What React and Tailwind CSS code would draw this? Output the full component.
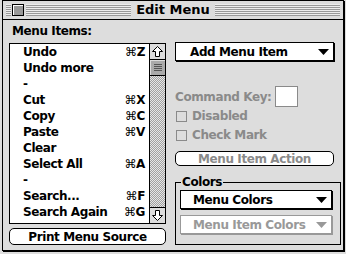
import React from 'react'

const items = [
  ['Undo', 'Z'],
  ['Undo more', ''],
  ['-', ''],
  ['Cut', 'X'],
  ['Copy', 'C'],
  ['Paste', 'V'],
  ['Clear', ''],
  ['Select All', 'A'],
  ['-', ''],
  ['Search...', 'F'],
  ['Search Again', 'G'],
]

const font = { fontFamily: '"DejaVu Sans", "Liberation Sans", sans-serif' }

function Triangle({ color = '#000' }) {
  return (
    <svg width="11" height="6" viewBox="0 0 11 6">
      <polygon points="0,0 11,0 5.5,6" fill={color} />
    </svg>
  )
}

function Arrow({ down }) {
  return (
    <svg width="11" height="11" viewBox="0 0 11 11" className={down ? 'rotate-180' : ''}>
      <polygon points="5.5,0.5 10.5,5.5 7.5,5.5 7.5,10.5 3.5,10.5 3.5,5.5 0.5,5.5" fill="#fff" stroke="#000" strokeWidth="1" />
    </svg>
  )
}

function Popup({ label, disabled, className = '' }) {
  return (
    <div
      className={`flex items-center justify-between h-[19px] pr-[4px] bg-white border ${
        disabled ? 'border-[#999] text-[#999] shadow-[1px_1px_0_#999]' : 'border-black shadow-[1px_1px_0_#000]'
      } ${className}`}
    >
      <span>{label}</span>
      <Triangle color={disabled ? '#999' : '#000'} />
    </div>
  )
}

function Checkbox({ label }) {
  return (
    <div className="flex items-center gap-[5px] h-[16px] text-[#8a8a8a]">
      <div className="w-[11px] h-[11px] border border-[#8a8a8a] ml-[1px]" />
      <span>{label}</span>
    </div>
  )
}

export default function App() {
  return (
    <div className="w-[346px] h-[254px] bg-[#dddddd] pl-[2px] overflow-hidden text-[12px] font-bold text-black leading-[16px] tracking-[-0.4px]" style={font}>
      <div className="w-[342px] h-[251px] border border-black shadow-[1px_1px_0_#000] bg-[#dddddd] flex flex-col">
        {/* title bar */}
        <div className="h-[19px] shrink-0 border-b border-black flex items-center px-[3px]">
          <div className="relative flex-1 h-[12px] flex items-center justify-center bg-[repeating-linear-gradient(to_bottom,#eeeeee_0px,#eeeeee_1px,#9a9a9a_1px,#9a9a9a_2px)]">
            <div className="absolute left-[5px] top-[-1px] w-[15px] h-[14px] bg-[#dddddd] px-[1px] flex items-center">
              <div className="w-[12px] h-[12px] border border-black bg-[#999] shadow-[inset_1px_1px_0_#fff]" />
            </div>
            <span className="bg-[#dddddd] px-[5px] text-[13px] leading-[14px] tracking-normal">Edit Menu</span>
          </div>
        </div>

        {/* body */}
        <div className="flex pl-[6px] pr-[2px] gap-[9px]">
          {/* left column */}
          <div className="w-[157px] flex flex-col">
            <div className="pt-[3px] pl-[3px] h-[23px]">Menu Items:</div>
            <div className="h-[181px] border border-black bg-white flex">
              <div className="flex-1 flex flex-col">
                {items.map(([name, key], i) => (
                  <div key={i} className="h-[16px] flex items-center justify-between pl-[13px] pr-[4px]">
                    <span>{name}</span>
                    {key && (
                      <span>
                        <span className="font-normal">⌘</span>
                        {key}
                      </span>
                    )}
                  </div>
                ))}
              </div>
              <div className="w-[16px] border-l border-black flex flex-col">
                <div className="h-[16px] border-b border-black flex items-center justify-center bg-[#dddddd]">
                  <Arrow />
                </div>
                <div className="h-[16px] border-b border-black bg-[#aaaaaa] flex flex-col items-center justify-center gap-[1px] shadow-[inset_1px_1px_0_#ddd]">
                  <div className="w-[8px] h-[1px] bg-[#555]" />
                  <div className="w-[8px] h-[1px] bg-[#555]" />
                  <div className="w-[8px] h-[1px] bg-[#555]" />
                  <div className="w-[8px] h-[1px] bg-[#555]" />
                </div>
                <div className="flex-1 bg-[image:repeating-conic-gradient(#a0a0a0_0_25%,#e6e6e6_0_50%)] bg-[length:2px_2px]" />
                <div className="h-[16px] border-t border-black flex items-center justify-center bg-[#dddddd]">
                  <Arrow down />
                </div>
              </div>
            </div>
            <div className="mt-[4px] h-[17px] border border-black rounded-[5px] bg-white flex items-center justify-center">
              Print Menu Source
            </div>
          </div>

          {/* right column */}
          <div className="flex-1 flex flex-col">
            <Popup label="Add Menu Item" className="mt-[22px] w-[159px] pl-[14px]" />
            <div className="mt-[25px] flex items-center h-[21px] text-[#8a8a8a]">
              <span>Command Key:</span>
              <div className="ml-[3px] w-[23px] h-[21px] border border-[#8a8a8a] bg-white" />
            </div>
            <div className="mt-[1px] flex flex-col gap-[3px]">
              <Checkbox label="Disabled" />
              <Checkbox label="Check Mark" />
            </div>
            <div className="mt-[8px] w-[159px] h-[15px] border border-black rounded-[5px] bg-white flex items-center justify-center text-[#8a8a8a]">
              Menu Item Action
            </div>
            <div className="relative mt-[16px] h-[63px] border border-black pt-[7px] pl-[4px]">
              <span className="absolute left-[5px] top-[-9px] bg-[#dddddd] pl-[1px] pr-[1px]">Colors</span>
              <Popup label="Menu Colors" className="w-[152px] pl-[12px]" />
              <Popup label="Menu Item Colors" disabled className="mt-[6px] w-[152px] pl-[12px]" />
            </div>
          </div>
        </div>
      </div>
    </div>
  )
}
